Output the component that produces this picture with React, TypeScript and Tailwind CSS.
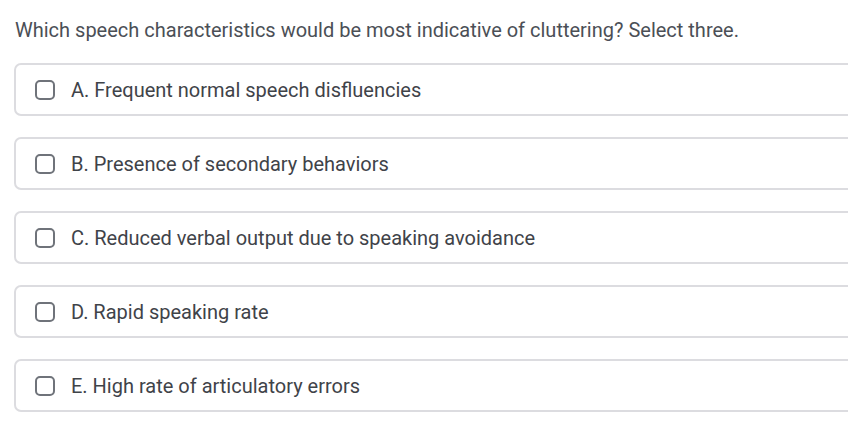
const options = [
  "A. Frequent normal speech disfluencies",
  "B. Presence of secondary behaviors",
  "C. Reduced verbal output due to speaking avoidance",
  "D. Rapid speaking rate",
  "E. High rate of articulatory errors",
];

export default function App() {
  return (
    <main
      className="h-[443px] w-[848px] overflow-hidden bg-white pl-[14px] pt-[18px]"
      style={{ fontFamily: "Roboto, 'Liberation Sans', sans-serif" }}
    >
      <p className="pl-[1px] text-[20px] leading-[24px] text-[#4b4f56]">
        Which speech characteristics would be most indicative of cluttering? Select three.
      </p>
      <div className="mt-[21px] flex w-[860px] flex-col gap-[21px]">
        {options.map((label) => (
          <label
            key={label}
            className="flex h-[53px] items-center gap-[16px] rounded-[7px] border-2 border-[#dcdce0] pl-[19px]"
          >
            <span className="h-[20px] w-[20px] shrink-0 rounded-[5px] border-2 border-[#6f737a] bg-white" />
            <span className="text-[20px] leading-[24px] text-[#3f4349]">{label}</span>
          </label>
        ))}
      </div>
    </main>
  );
}
